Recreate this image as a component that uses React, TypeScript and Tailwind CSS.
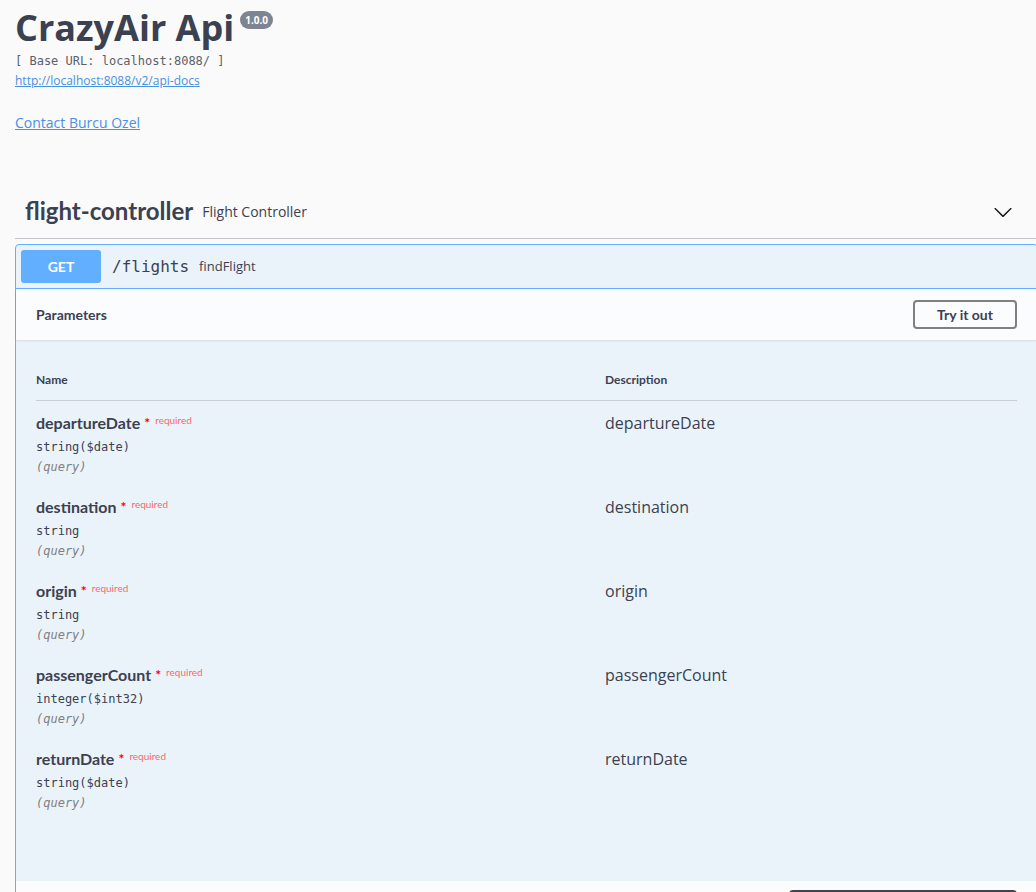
import React from 'react'

const params = [
  { name: 'departureDate', type: 'string($date)' },
  { name: 'destination', type: 'string' },
  { name: 'origin', type: 'string' },
  { name: 'passengerCount', type: 'integer($int32)' },
  { name: 'returnDate', type: 'string($date)' },
]

const head = "font-['Lato',sans-serif]"
const body = "font-['Open_Sans',sans-serif]"
const mono = "font-['DejaVu_Sans_Mono',monospace]"

export default function App() {
  return (
    <div className="w-[1036px] h-[892px] overflow-hidden bg-[#fafafa] text-[#3b4151]">
      <div className="pl-[15px]">
        {/* info */}
        <div className="pt-[4px]">
          <h2 className={`${body} text-[36px] font-bold leading-[48px] flex items-start`}>
            CrazyAir Api
            <span className={`${body} ml-[6px] mt-[7px] rounded-full bg-[#7d8492] px-[5px] text-[10px] font-bold leading-[18px] text-white`}>1.0.0</span>
          </h2>
          <div className={`${mono} text-[12px] font-light leading-[16px] mt-[1px] text-[#5a5f6b]`}>[ Base URL: localhost:8088/ ]</div>
          <a className={`${body} block mt-[4px] text-[12px] leading-[16px] text-[#4990e2] underline`}>http://localhost:8088/v2/api-docs</a>
          <a className={`${body} block mt-[24px] text-[14px] leading-[20px] text-[#4990e2] underline`}>Contact Burcu Ozel</a>
        </div>

        {/* tag header */}
        <div className="mt-[51px] w-[1023px]">
          <div className="flex h-[55px] items-center border-b border-[#c4c6cb] pl-[10px] pr-[25px]">
            <span className={`${head} text-[24px] font-bold`}>flight-controller</span>
            <span className={`${body} ml-[9px] text-[14px]`}>Flight Controller</span>
            <svg className="ml-auto mt-[2px]" width="20" height="20" viewBox="0 0 20 20">
              <path
                fill="#1a1a1a"
                d="M17.418 6.109c.272-.268.709-.268.979 0s.271.701 0 .969l-7.908 7.83c-.27.268-.707.268-.979 0l-7.908-7.83c-.27-.268-.27-.701 0-.969.271-.268.709-.268.979 0L10 13.25l7.418-7.141z"
              />
            </svg>
          </div>

          {/* operation */}
          <div className="mt-[5px] rounded-[4px] border border-[#61affe] bg-[#ebf3fa]">
            <div className="flex h-[44px] items-center border-b border-[#61affe] px-[5px]">
              <span className={`${head} flex h-[33px] w-[80px] items-center justify-center rounded-[3px] bg-[#61affe] text-[14px] font-bold text-white`}>GET</span>
              <span className={`${mono} ml-[11px] text-[16px] text-[#3b4151]`}>/flights</span>
              <span className={`${body} ml-[10px] text-[13px]`}>findFlight</span>
            </div>

            <div className="flex h-[51px] items-center justify-between bg-[#fbfcfe] px-[20px] shadow-[0_1px_2px_rgba(0,0,0,0.1)]">
              <span className={`${head} text-[14px] font-bold`}>Parameters</span>
              <button className={`${head} h-[29px] w-[104px] rounded-[4px] border-2 border-[#808080] text-[14px] font-bold text-[#3b4151]`}>
                Try it out
              </button>
            </div>

            <div className="px-[20px] pt-[20px] pb-[60px]">
              <div className="flex border-b border-[#c8cdd6] py-[12px]">
                <span className={`${head} w-[569px] text-[12px] font-bold leading-[16px]`}>Name</span>
                <span className={`${head} text-[12px] font-bold leading-[16px]`}>Description</span>
              </div>
              {params.map((p) => (
                <div key={p.name} className="flex h-[84px] pt-[10px]">
                  <div className="w-[569px]">
                    <div className={`${head} flex items-start h-[24px] text-[16px] font-bold leading-[24px]`}>
                      {p.name}
                      <span className="ml-[4px] text-[#ff0000] text-[14px] leading-[24px]">*</span>
                      <span className="ml-[5px] mt-[3px] text-[10px] font-normal leading-[12px] text-[#ff6666]">required</span>
                    </div>
                    <div className={`${mono} mt-[2px] text-[12px] leading-[20px]`}>{p.type}</div>
                    <div className={`${mono} text-[12px] italic leading-[20px] text-[#808080]`}>(query)</div>
                  </div>
                  <div className={`${body} text-[16px] leading-[24px] text-[#3b4151]`}>{p.name}</div>
                </div>
              ))}
            </div>

            <div className="flex h-[60px] items-start justify-end bg-[#fbfcfe] px-[20px] pt-[9px]">
              <div className="h-[36px] w-[228px] rounded-[4px] border-2 border-[#41444e] bg-[#f7f7f7]" />
            </div>
          </div>
        </div>
      </div>
    </div>
  )
}
